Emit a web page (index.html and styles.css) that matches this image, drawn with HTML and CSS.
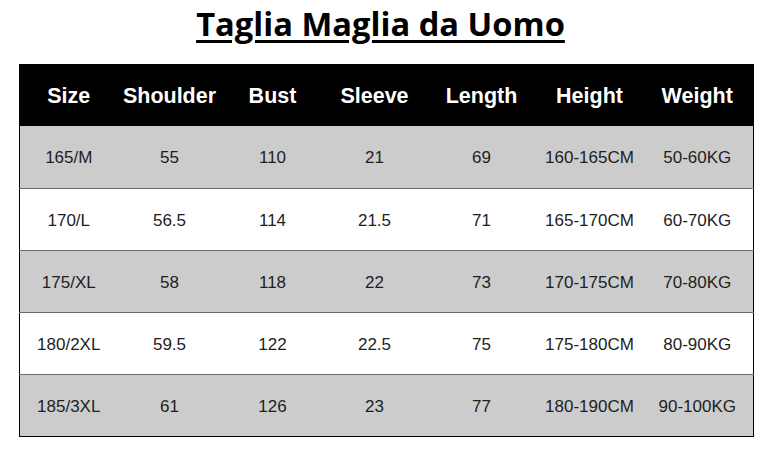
FILE: index.html
```html
<!DOCTYPE html>
<html>
<head>
<meta charset="utf-8">
<link rel="stylesheet" href="styles.css">
</head>
<body>
<div class="page">
  <h1 class="title">Taglia Maglia da Uomo</h1>
  <table class="size-table">
    <colgroup>
      <col class="c1"><col class="c2"><col class="c3"><col class="c4"><col class="c5"><col class="c6"><col class="c7">
    </colgroup>
    <thead>
      <tr><th>Size</th><th>Shoulder</th><th>Bust</th><th>Sleeve</th><th>Length</th><th>Height</th><th>Weight</th></tr>
    </thead>
    <tbody>
      <tr class="grey"><td>165/M</td><td>55</td><td>110</td><td>21</td><td>69</td><td>160-165CM</td><td>50-60KG</td></tr>
      <tr><td>170/L</td><td>56.5</td><td>114</td><td>21.5</td><td>71</td><td>165-170CM</td><td>60-70KG</td></tr>
      <tr class="grey"><td>175/XL</td><td>58</td><td>118</td><td>22</td><td>73</td><td>170-175CM</td><td>70-80KG</td></tr>
      <tr><td>180/2XL</td><td>59.5</td><td>122</td><td>22.5</td><td>75</td><td>175-180CM</td><td>80-90KG</td></tr>
      <tr class="grey"><td>185/3XL</td><td>61</td><td>126</td><td>23</td><td>77</td><td>180-190CM</td><td>90-100KG</td></tr>
    </tbody>
  </table>
</div>
</body>
</html>
```
FILE: styles.css
```css
html, body {
  margin: 0;
  padding: 0;
  background: #fff;
}
.page {
  width: 773px;
  height: 453px;
  display: flex;
  flex-direction: column;
  align-items: flex-start;
}
.title {
  align-self: center;
  margin: 0 12px 0 0;
  height: 64px;
  box-sizing: border-box;
  padding-top: 2px;
  font-family: "Open Sans", "Noto Sans", sans-serif;
  font-weight: 700;
  font-size: 32.7px;
  line-height: 44px;
  color: #000;
  text-decoration: underline;
  text-decoration-thickness: 3px;
  text-underline-offset: 4px;
}
.size-table {
  margin-left: 19px;
  width: 734px;
  border-collapse: collapse;
  table-layout: fixed;
  border-left: 1px solid #000;
  border-right: 1px solid #000;
  border-bottom: 1px solid #000;
}
.c1 { width: 98px; }
.c2 { width: 104px; }
.c3 { width: 102px; }
.c4 { width: 102px; }
.c5 { width: 112px; }
.c6 { width: 104px; }
.c7 { width: 112px; }
th {
  background: #000;
  color: #fff;
  height: 62px;
  box-sizing: border-box;
  padding: 3px 0 0;
  font-family: "Liberation Sans", Arial, sans-serif;
  font-weight: 700;
  font-size: 21.5px;
  text-align: center;
  vertical-align: middle;
}
td {
  height: 62px;
  box-sizing: border-box;
  padding: 3px 0 0;
  border-top: 1px solid #6b6b6b;
  font-family: "Liberation Sans", Arial, sans-serif;
  font-size: 17px;
  color: #1e1e1e;
  text-align: center;
  vertical-align: middle;
}
tbody tr:first-child td {
  border-top: none;
}
.grey td {
  background: #cccccc;
}
```
